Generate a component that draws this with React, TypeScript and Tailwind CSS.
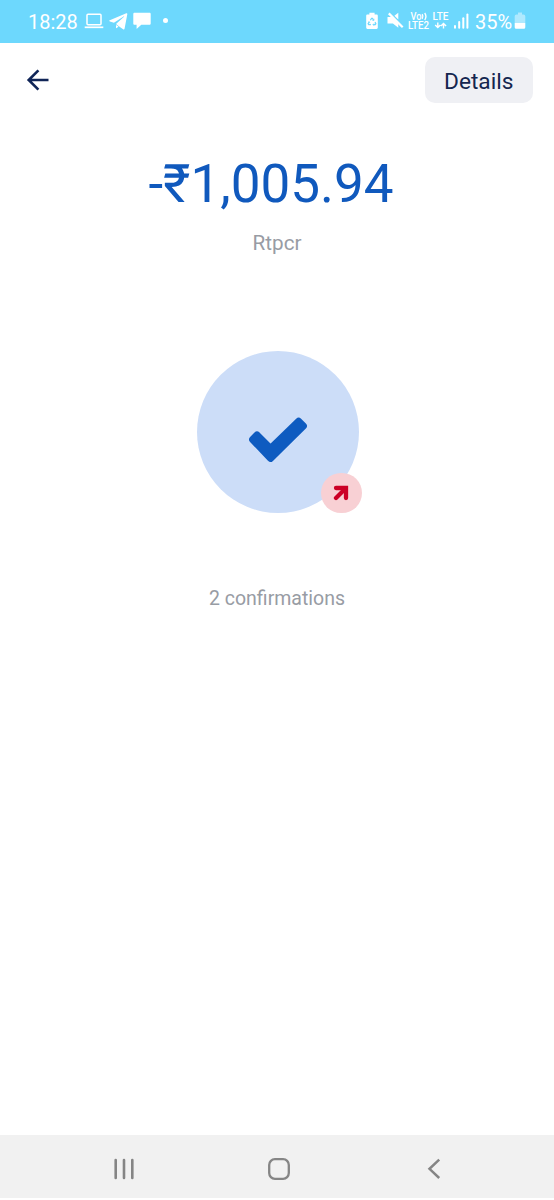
import React from "react";

function StatusBar() {
  return (
    <header className="flex h-[42.5px] shrink-0 items-start bg-[#6dd8fd] pl-[28px] text-white">
      <span className="mt-[10px] w-[50px] whitespace-nowrap text-[20px] leading-6">18:28</span>
      <svg className="ml-[6px] mt-[13px]" width="20" height="16" viewBox="0 0 20 16" fill="none" stroke="currentColor">
        <rect x="3" y="1.2" width="14" height="10.6" rx="1" strokeWidth="1.5" />
        <path d="M.7 14.3h18.6" strokeWidth="1.7" />
      </svg>
      <svg className="ml-[5px] mt-[13px]" width="19" height="17" viewBox="0 0 19 17" fill="currentColor">
        <path d="M17.3.3.8 7.2c-.9.4-.8 1 .1 1.3l4 1.3L14.6 3.4c.4-.3.7 0 .4.3L7 11.1l3.9 3 3.2 2.1c.8.4 1.3.2 1.5-.7L18.3 1.3c.2-.9-.3-1.3-1-1ZM7 12.1v3.2c.5 0 .8-.2 1.1-.5l1.4-1.3Z" />
      </svg>
      <svg className="ml-[5px] mt-[12px]" width="18" height="18" viewBox="0 0 18 18" fill="currentColor">
        <path d="M1.6.7h14.8c.9 0 1.3.5 1.3 1.3v9.5c0 .9-.5 1.3-1.3 1.3H8.3L3.6 17v-4.2h-2c-.9 0-1.3-.5-1.3-1.3V2C.3 1.2.8.7 1.6.7Z" />
      </svg>
      <span className="ml-[12px] mt-[18px] size-[5px] rounded-full bg-white" />
      <div className="ml-auto flex items-start pr-[28px]">
        <svg className="mt-[12px]" width="12" height="18" viewBox="0 0 12 18">
          <path d="M3.4.7h5.2v1.8h1.9c.8 0 1.3.5 1.3 1.3v11.8c0 .8-.5 1.3-1.3 1.3h-9c-.8 0-1.3-.5-1.3-1.3V3.8c0-.8.5-1.3 1.3-1.3h1.9Z" fill="currentColor" />
          <g fill="none" stroke="#6dd8fd" strokeWidth="1.2">
            <path d="m4.4 8.3 1.2-2h.8l1.2 2M9 10l.9 1.7-.6.9H7.1M4.9 12.6H2.7l-.6-.9L3.1 10" />
            <path d="m7.9 6.7.1 1.8-1.7-.1M8.1 11.4l-1.2 1.2 1.2 1.2M2 10.2l1.4-.5.4 1.6" strokeWidth=".7" />
          </g>
        </svg>
        <svg className="ml-[9px] mt-[12px]" width="17" height="17" viewBox="0 0 17 17" fill="currentColor">
          <path d="M.5 5h4.2l6.6 6.6v4.2L5.9 11.5H.5ZM11.3.8v6.8L7.4 3.8Z" />
          <path d="m1.8 1.4 13.9 13.9" stroke="currentColor" strokeWidth="2.2" />
        </svg>
        <svg className="ml-[4px] mt-[12px]" width="43" height="18" viewBox="0 0 43 18" fill="currentColor">
          <g fontSize="10" fontWeight="500" fontFamily="Roboto, sans-serif">
            <text x="2.5" y="8" textLength="11" lengthAdjust="spacingAndGlyphs">Vo</text>
            <text x="0" y="17" textLength="21" lengthAdjust="spacingAndGlyphs">LTE2</text>
            <text x="24.5" y="8" textLength="16" lengthAdjust="spacingAndGlyphs">LTE</text>
          </g>
          <path d="M14.2 2.2q1.4 2.3 0 4.6M16.7 1q2.5 3.5 0 7M29.8 10.4v5M27.2 12.9l2.6 2.6 2.6-2.6M35.5 16.6v-5M32.9 14.1l2.6-2.6 2.6 2.6" fill="none" stroke="currentColor" strokeWidth="1.4" />
        </svg>
        <svg className="ml-[3px] mt-[13px]" width="15" height="16" viewBox="0 0 15 16" fill="currentColor">
          <rect x="0" y="12" width="2" height="3.7" rx="1" />
          <rect x="4.2" y="8" width="2" height="7.7" rx="1" />
          <rect x="8.3" y="4.2" width="2" height="11.5" rx="1" />
          <rect x="12.4" y=".5" width="2" height="15.2" rx="1" />
        </svg>
        <span className="ml-[6px] mt-[10px] w-[39px] whitespace-nowrap text-[20px] leading-6">35%</span>
        <svg className="mt-[12px]" width="12" height="18" viewBox="0 0 12 18" fill="currentColor">
          <path d="M4 .5h4v2h1.5q1.8 0 1.8 1.8V11H.7V4.3q0-1.8 1.8-1.8H4Z" opacity=".45" />
          <path d="M.7 11h10.6v4.3q0 1.5-1.5 1.5H2.2q-1.5 0-1.5-1.5Z" />
        </svg>
      </div>
    </header>
  );
}

function NavigationBar() {
  return (
    <nav className="mb-[2px] flex h-[63px] shrink-0 items-center bg-[#f1f1f1] pt-[4px] text-[#858585]">
      <button aria-label="Recent apps" className="ml-[113px]">
        <svg width="22" height="22" viewBox="0 0 22 22" stroke="currentColor" strokeWidth="2.6" strokeLinecap="round">
          <path d="M2.7 2v18M11 2v18M19.3 2v18" />
        </svg>
      </button>
      <button aria-label="Home" className="ml-[133px]">
        <svg width="22" height="22" viewBox="0 0 22 22" fill="none" stroke="currentColor" strokeWidth="2.3">
          <rect x="1.2" y="1.2" width="19.6" height="19.6" rx="5.7" />
        </svg>
      </button>
      <button aria-label="Back" className="ml-[137px]">
        <svg width="14" height="22" viewBox="0 0 14 22" fill="none" stroke="currentColor" strokeWidth="2.5">
          <path d="M12.2 1.6 2.5 10.8l9.7 9.2" />
        </svg>
      </button>
    </nav>
  );
}

export default function App() {
  return (
    <div className="flex h-[1200px] w-[554px] flex-col bg-white font-[Roboto,sans-serif]">
      <StatusBar />
      <main className="flex flex-1 flex-col items-center">
        <div className="flex w-full items-start justify-between pl-[26px] pr-[21.5px] pt-[14.5px]">
          <button aria-label="Go back" className="mt-[12px] text-[#102557]">
            <svg width="23" height="22" viewBox="0 0 23 22" fill="none" stroke="currentColor" strokeWidth="2.6">
              <path d="M22.5 11H2.2M12.4 1.3 2.7 11l9.7 9.7" />
            </svg>
          </button>
          <button className="h-[46px] w-[107.5px] rounded-[10px] bg-[#eff0f4] pt-[4px] text-[22.7px] text-[#14264f]">
            Details
          </button>
        </div>
        <h1 className="mr-[12px] mt-[51px] whitespace-nowrap text-[53px] leading-[60px] text-[#1059bd]">-₹1,005.94</h1>
        <p className="mt-[15px] text-[20.7px] leading-[28px] text-[#989ca4]">Rtpcr</p>
        <div className="relative ml-px mt-[94px] flex size-[162px] items-center justify-center rounded-full bg-[#ccddf8]">
          <svg className="mt-[16px]" width="60" height="46" viewBox="0 0 60 46" fill="#0e5bc0" stroke="#0e5bc0" strokeWidth="7" strokeLinejoin="round">
            <path d="m4.6 22.5 4.4-4.6 13.5 13.5L50.6 4.2l4.8 4.8-32.9 32.4Z" />
          </svg>
          <span className="absolute left-[124.5px] top-[121.5px] flex size-[40.5px] items-center justify-center rounded-full bg-[#f8d0d4]">
            <svg className="mr-px" width="16" height="16" viewBox="0 0 16 16" fill="none" stroke="#cc0026" strokeWidth="4.3" strokeLinecap="round">
              <path d="M3 3h10v10" />
              <path d="m3 13 8-8" />
            </svg>
          </span>
        </div>
        <p className="mt-[72px] text-[19.5px] leading-[28px] text-[#989ca4]">2 confirmations</p>
      </main>
      <NavigationBar />
    </div>
  );
}
